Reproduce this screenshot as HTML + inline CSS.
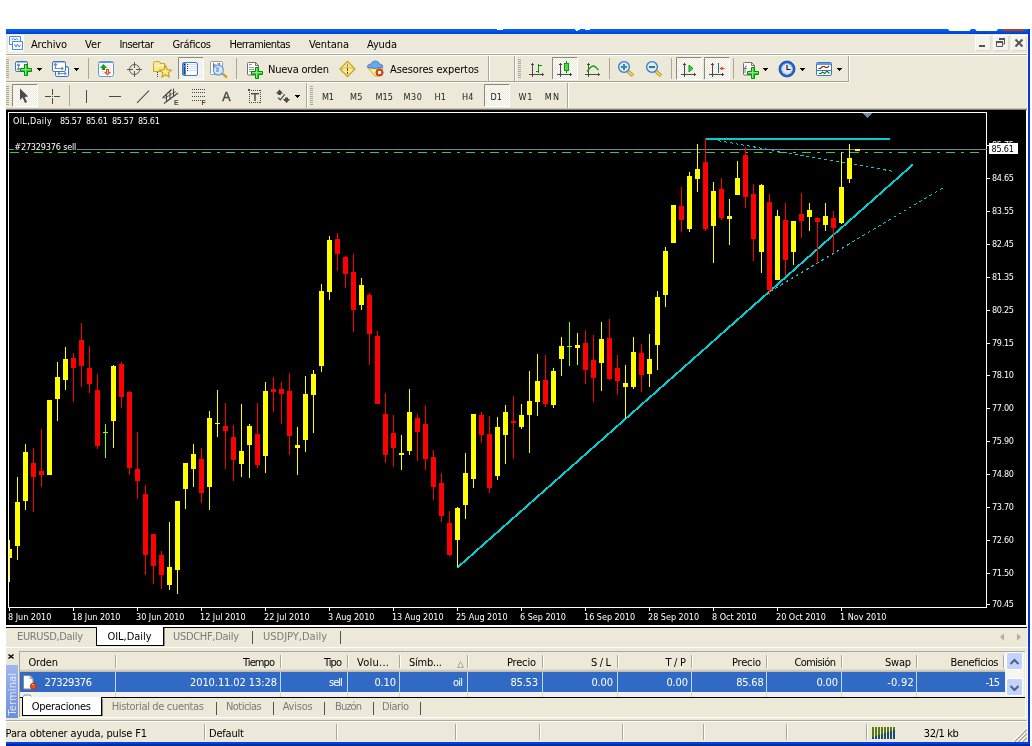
<!DOCTYPE html><html><head><meta charset="utf-8"><title>OIL,Daily</title><style>html,body{margin:0;padding:0;background:#fff}body{width:1032px;height:746px;overflow:hidden}svg{display:block;font-family:"DejaVu Sans Condensed","Liberation Sans",sans-serif;font-size:11px;will-change:transform;-webkit-font-smoothing:antialiased}text{white-space:pre}</style></head><body><svg width="1032" height="746" viewBox="0 0 1032 746">
<rect x="6" y="29" width="1024" height="717" fill="#ECE9D8"/>
<defs><linearGradient id="tb" x1="0" y1="0" x2="0" y2="1"><stop offset="0" stop-color="#0b62ee"/><stop offset=".5" stop-color="#0054e3"/><stop offset="1" stop-color="#0040c8"/></linearGradient><pattern id="chk" width="2" height="2" patternUnits="userSpaceOnUse"><rect width="2" height="2" fill="#fff"/><rect width="1" height="1" fill="#ECE9D8"/><rect x="1" y="1" width="1" height="1" fill="#ECE9D8"/></pattern></defs>
<rect x="6" y="29" width="1024" height="5" fill="url(#tb)"/>
<rect x="1027" y="34" width="1" height="708" fill="#fbf8ec"/>
<rect x="1028" y="29" width="2" height="717" fill="#0636df"/>
<rect x="6" y="53" width="1021" height="1" fill="#fff"/>
<rect x="6" y="54" width="1021" height="1" fill="#aca899"/>
<rect x="6" y="55" width="1021" height="1" fill="#fff"/>
<rect x="6" y="81" width="843" height="1" fill="#a8a48f"/>
<rect x="6" y="82" width="844" height="1" fill="#fff"/>
<rect x="6" y="108" width="1021" height="1" fill="#c9c6b4"/>
<rect x="6" y="109" width="1021" height="1" fill="#807d6c"/>
<rect x="6" y="110" width="1020" height="515" fill="#000"/>
<rect x="1026" y="110" width="1" height="515" fill="#fff"/>
<g shape-rendering="crispEdges">
<path d="M8.5 608 V112.5 H986.5 V608 M8 607.5 H987" fill="none" stroke="#fff" stroke-width="1"/>
<rect x="9" y="149" width="978" height="1" fill="#778899"/>
<path d="M10 152.5 H980" fill="none" stroke="#32cd32" stroke-width="1" stroke-dasharray="9 6 3 6"/>
<path d="M457.5 567.5 L913 164.5" fill="none" stroke="#00ced1" stroke-width="2"/>
<rect x="706" y="138" width="184" height="2" fill="#00ced1"/>
<path d="M706 138.5 L894 171.5" fill="none" stroke="#00ced1" stroke-width="1" stroke-dasharray="3 3"/>
<path d="M770 291.5 L945 186.5" fill="none" stroke="#00ced1" stroke-width="1" stroke-dasharray="3 3"/>
<rect x="9" y="540" width="1" height="42" fill="#ffff00"/>
<rect x="9" y="549" width="3" height="9" fill="#ffff00"/>
<rect x="17" y="477" width="1" height="83" fill="#ffff00"/>
<rect x="15" y="502" width="5" height="44" fill="#ffff00"/>
<rect x="25" y="444" width="1" height="66" fill="#ffff00"/>
<rect x="23" y="452" width="5" height="49" fill="#ffff00"/>
<rect x="33" y="448" width="1" height="64" fill="#ff0000"/>
<rect x="31" y="463" width="5" height="14" fill="#ff0000"/>
<rect x="41" y="429" width="1" height="58" fill="#ff0000"/>
<rect x="39" y="471" width="5" height="4" fill="#ff0000"/>
<rect x="49" y="400" width="1" height="75" fill="#ffff00"/>
<rect x="47" y="400" width="5" height="75" fill="#ffff00"/>
<rect x="57" y="362" width="1" height="59" fill="#ffff00"/>
<rect x="55" y="377" width="5" height="22" fill="#ffff00"/>
<rect x="65" y="347" width="1" height="43" fill="#ffff00"/>
<rect x="63" y="359" width="5" height="21" fill="#ffff00"/>
<rect x="73" y="353" width="1" height="49" fill="#ff0000"/>
<rect x="71" y="358" width="5" height="10" fill="#ff0000"/>
<rect x="81" y="323" width="1" height="64" fill="#ff0000"/>
<rect x="79" y="340" width="5" height="26" fill="#ff0000"/>
<rect x="89" y="346" width="1" height="47" fill="#ff0000"/>
<rect x="87" y="368" width="5" height="16" fill="#ff0000"/>
<rect x="97" y="374" width="1" height="75" fill="#ff0000"/>
<rect x="95" y="390" width="5" height="56" fill="#ff0000"/>
<rect x="105" y="424" width="1" height="34" fill="#7fff00"/>
<rect x="103" y="432" width="5" height="1" fill="#7fff00"/>
<rect x="113" y="365" width="1" height="83" fill="#ffff00"/>
<rect x="111" y="366" width="5" height="55" fill="#ffff00"/>
<rect x="121" y="362" width="1" height="46" fill="#ff0000"/>
<rect x="119" y="364" width="5" height="33" fill="#ff0000"/>
<rect x="129" y="391" width="1" height="84" fill="#ff0000"/>
<rect x="127" y="392" width="5" height="76" fill="#ff0000"/>
<rect x="137" y="432" width="1" height="67" fill="#ff0000"/>
<rect x="135" y="469" width="5" height="12" fill="#ff0000"/>
<rect x="145" y="485" width="1" height="90" fill="#ff0000"/>
<rect x="143" y="494" width="5" height="61" fill="#ff0000"/>
<rect x="153" y="534" width="1" height="50" fill="#ff0000"/>
<rect x="151" y="534" width="5" height="32" fill="#ff0000"/>
<rect x="161" y="551" width="1" height="38" fill="#ff0000"/>
<rect x="159" y="555" width="5" height="20" fill="#ff0000"/>
<rect x="169" y="522" width="1" height="68" fill="#ffff00"/>
<rect x="167" y="567" width="5" height="18" fill="#ffff00"/>
<rect x="177" y="501" width="1" height="93" fill="#ffff00"/>
<rect x="175" y="501" width="5" height="69" fill="#ffff00"/>
<rect x="185" y="463" width="1" height="46" fill="#ffff00"/>
<rect x="183" y="463" width="5" height="26" fill="#ffff00"/>
<rect x="193" y="444" width="1" height="43" fill="#ffff00"/>
<rect x="191" y="454" width="5" height="15" fill="#ffff00"/>
<rect x="201" y="448" width="1" height="55" fill="#ff0000"/>
<rect x="199" y="459" width="5" height="34" fill="#ff0000"/>
<rect x="209" y="411" width="1" height="99" fill="#ffff00"/>
<rect x="207" y="418" width="5" height="69" fill="#ffff00"/>
<rect x="217" y="390" width="1" height="47" fill="#ffff00"/>
<rect x="215" y="423" width="5" height="1" fill="#ffff00"/>
<rect x="225" y="403" width="1" height="66" fill="#ff0000"/>
<rect x="223" y="426" width="5" height="5" fill="#ff0000"/>
<rect x="233" y="425" width="1" height="56" fill="#ff0000"/>
<rect x="231" y="437" width="5" height="23" fill="#ff0000"/>
<rect x="241" y="404" width="1" height="73" fill="#ffff00"/>
<rect x="239" y="451" width="5" height="13" fill="#ffff00"/>
<rect x="249" y="424" width="1" height="54" fill="#ffff00"/>
<rect x="247" y="426" width="5" height="19" fill="#ffff00"/>
<rect x="257" y="403" width="1" height="65" fill="#ff0000"/>
<rect x="255" y="434" width="5" height="31" fill="#ff0000"/>
<rect x="265" y="382" width="1" height="91" fill="#ffff00"/>
<rect x="263" y="391" width="5" height="65" fill="#ffff00"/>
<rect x="273" y="377" width="1" height="35" fill="#ff0000"/>
<rect x="271" y="389" width="5" height="3" fill="#ff0000"/>
<rect x="281" y="382" width="1" height="42" fill="#ff0000"/>
<rect x="279" y="389" width="5" height="5" fill="#ff0000"/>
<rect x="289" y="373" width="1" height="82" fill="#ff0000"/>
<rect x="287" y="391" width="5" height="45" fill="#ff0000"/>
<rect x="297" y="427" width="1" height="48" fill="#ffff00"/>
<rect x="295" y="445" width="5" height="3" fill="#ffff00"/>
<rect x="305" y="376" width="1" height="76" fill="#ffff00"/>
<rect x="303" y="394" width="5" height="46" fill="#ffff00"/>
<rect x="313" y="370" width="1" height="63" fill="#ffff00"/>
<rect x="311" y="374" width="5" height="21" fill="#ffff00"/>
<rect x="321" y="284" width="1" height="88" fill="#ffff00"/>
<rect x="319" y="291" width="5" height="75" fill="#ffff00"/>
<rect x="329" y="236" width="1" height="64" fill="#ffff00"/>
<rect x="327" y="240" width="5" height="52" fill="#ffff00"/>
<rect x="337" y="233" width="1" height="38" fill="#ff0000"/>
<rect x="335" y="239" width="5" height="15" fill="#ff0000"/>
<rect x="345" y="256" width="1" height="32" fill="#ff0000"/>
<rect x="343" y="257" width="5" height="17" fill="#ff0000"/>
<rect x="353" y="254" width="1" height="78" fill="#ff0000"/>
<rect x="351" y="272" width="5" height="38" fill="#ff0000"/>
<rect x="361" y="278" width="1" height="32" fill="#ffff00"/>
<rect x="359" y="285" width="5" height="20" fill="#ffff00"/>
<rect x="369" y="293" width="1" height="72" fill="#ff0000"/>
<rect x="367" y="295" width="5" height="39" fill="#ff0000"/>
<rect x="377" y="331" width="1" height="73" fill="#ff0000"/>
<rect x="375" y="336" width="5" height="68" fill="#ff0000"/>
<rect x="385" y="393" width="1" height="70" fill="#ff0000"/>
<rect x="383" y="414" width="5" height="41" fill="#ff0000"/>
<rect x="393" y="415" width="1" height="52" fill="#ff0000"/>
<rect x="391" y="433" width="5" height="15" fill="#ff0000"/>
<rect x="401" y="435" width="1" height="35" fill="#ffff00"/>
<rect x="399" y="453" width="5" height="2" fill="#ffff00"/>
<rect x="409" y="389" width="1" height="66" fill="#ffff00"/>
<rect x="407" y="412" width="5" height="39" fill="#ffff00"/>
<rect x="417" y="414" width="1" height="47" fill="#ff0000"/>
<rect x="415" y="418" width="5" height="14" fill="#ff0000"/>
<rect x="425" y="405" width="1" height="65" fill="#ff0000"/>
<rect x="423" y="424" width="5" height="35" fill="#ff0000"/>
<rect x="433" y="450" width="1" height="50" fill="#ff0000"/>
<rect x="431" y="457" width="5" height="30" fill="#ff0000"/>
<rect x="441" y="473" width="1" height="49" fill="#ff0000"/>
<rect x="439" y="483" width="5" height="33" fill="#ff0000"/>
<rect x="449" y="511" width="1" height="45" fill="#ff0000"/>
<rect x="447" y="523" width="5" height="32" fill="#ff0000"/>
<rect x="457" y="507" width="1" height="60" fill="#ffff00"/>
<rect x="455" y="508" width="5" height="32" fill="#ffff00"/>
<rect x="465" y="453" width="1" height="66" fill="#ffff00"/>
<rect x="463" y="473" width="5" height="32" fill="#ffff00"/>
<rect x="473" y="414" width="1" height="74" fill="#ffff00"/>
<rect x="471" y="414" width="5" height="65" fill="#ffff00"/>
<rect x="481" y="412" width="1" height="31" fill="#ff0000"/>
<rect x="479" y="415" width="5" height="20" fill="#ff0000"/>
<rect x="489" y="416" width="1" height="77" fill="#ff0000"/>
<rect x="487" y="434" width="5" height="54" fill="#ff0000"/>
<rect x="497" y="417" width="1" height="63" fill="#ffff00"/>
<rect x="495" y="427" width="5" height="49" fill="#ffff00"/>
<rect x="505" y="405" width="1" height="59" fill="#ffff00"/>
<rect x="503" y="412" width="5" height="23" fill="#ffff00"/>
<rect x="513" y="396" width="1" height="63" fill="#ff0000"/>
<rect x="511" y="421" width="5" height="2" fill="#ff0000"/>
<rect x="521" y="404" width="1" height="25" fill="#ffff00"/>
<rect x="519" y="415" width="5" height="12" fill="#ffff00"/>
<rect x="529" y="371" width="1" height="82" fill="#ffff00"/>
<rect x="527" y="401" width="5" height="14" fill="#ffff00"/>
<rect x="537" y="354" width="1" height="62" fill="#ffff00"/>
<rect x="535" y="381" width="5" height="21" fill="#ffff00"/>
<rect x="545" y="355" width="1" height="52" fill="#ff0000"/>
<rect x="543" y="380" width="5" height="24" fill="#ff0000"/>
<rect x="553" y="368" width="1" height="40" fill="#ffff00"/>
<rect x="551" y="371" width="5" height="34" fill="#ffff00"/>
<rect x="561" y="337" width="1" height="39" fill="#ffff00"/>
<rect x="559" y="346" width="5" height="13" fill="#ffff00"/>
<rect x="569" y="322" width="1" height="44" fill="#7fff00"/>
<rect x="567" y="346" width="5" height="1" fill="#7fff00"/>
<rect x="577" y="333" width="1" height="32" fill="#ffff00"/>
<rect x="575" y="345" width="5" height="3" fill="#ffff00"/>
<rect x="585" y="330" width="1" height="54" fill="#ff0000"/>
<rect x="583" y="343" width="5" height="27" fill="#ff0000"/>
<rect x="593" y="335" width="1" height="67" fill="#ff0000"/>
<rect x="591" y="360" width="5" height="18" fill="#ff0000"/>
<rect x="601" y="322" width="1" height="69" fill="#ffff00"/>
<rect x="599" y="339" width="5" height="24" fill="#ffff00"/>
<rect x="609" y="319" width="1" height="61" fill="#ff0000"/>
<rect x="607" y="338" width="5" height="41" fill="#ff0000"/>
<rect x="617" y="355" width="1" height="40" fill="#ff0000"/>
<rect x="615" y="368" width="5" height="13" fill="#ff0000"/>
<rect x="625" y="365" width="1" height="53" fill="#ffff00"/>
<rect x="623" y="383" width="5" height="4" fill="#ffff00"/>
<rect x="633" y="337" width="1" height="52" fill="#ffff00"/>
<rect x="631" y="352" width="5" height="35" fill="#ffff00"/>
<rect x="641" y="344" width="1" height="48" fill="#ff0000"/>
<rect x="639" y="353" width="5" height="22" fill="#ff0000"/>
<rect x="649" y="334" width="1" height="53" fill="#ffff00"/>
<rect x="647" y="359" width="5" height="15" fill="#ffff00"/>
<rect x="657" y="291" width="1" height="79" fill="#ffff00"/>
<rect x="655" y="297" width="5" height="48" fill="#ffff00"/>
<rect x="665" y="247" width="1" height="60" fill="#ffff00"/>
<rect x="663" y="251" width="5" height="44" fill="#ffff00"/>
<rect x="673" y="205" width="1" height="38" fill="#ffff00"/>
<rect x="671" y="205" width="5" height="38" fill="#ffff00"/>
<rect x="681" y="187" width="1" height="45" fill="#ff0000"/>
<rect x="679" y="206" width="5" height="14" fill="#ff0000"/>
<rect x="689" y="172" width="1" height="60" fill="#ffff00"/>
<rect x="687" y="176" width="5" height="53" fill="#ffff00"/>
<rect x="697" y="144" width="1" height="48" fill="#ffff00"/>
<rect x="695" y="169" width="5" height="10" fill="#ffff00"/>
<rect x="705" y="138" width="1" height="93" fill="#ff0000"/>
<rect x="703" y="162" width="5" height="67" fill="#ff0000"/>
<rect x="713" y="182" width="1" height="81" fill="#ffff00"/>
<rect x="711" y="191" width="5" height="35" fill="#ffff00"/>
<rect x="721" y="178" width="1" height="42" fill="#ff0000"/>
<rect x="719" y="189" width="5" height="29" fill="#ff0000"/>
<rect x="729" y="199" width="1" height="46" fill="#ffff00"/>
<rect x="727" y="216" width="5" height="3" fill="#ffff00"/>
<rect x="737" y="161" width="1" height="34" fill="#ffff00"/>
<rect x="735" y="178" width="5" height="17" fill="#ffff00"/>
<rect x="745" y="147" width="1" height="61" fill="#ff0000"/>
<rect x="743" y="155" width="5" height="42" fill="#ff0000"/>
<rect x="753" y="184" width="1" height="77" fill="#ff0000"/>
<rect x="751" y="194" width="5" height="45" fill="#ff0000"/>
<rect x="761" y="184" width="1" height="89" fill="#ffff00"/>
<rect x="759" y="185" width="5" height="67" fill="#ffff00"/>
<rect x="769" y="194" width="1" height="101" fill="#ff0000"/>
<rect x="767" y="202" width="5" height="88" fill="#ff0000"/>
<rect x="777" y="210" width="1" height="70" fill="#ffff00"/>
<rect x="775" y="216" width="5" height="64" fill="#ffff00"/>
<rect x="785" y="203" width="1" height="73" fill="#ff0000"/>
<rect x="783" y="220" width="5" height="40" fill="#ff0000"/>
<rect x="793" y="221" width="1" height="44" fill="#ffff00"/>
<rect x="791" y="221" width="5" height="31" fill="#ffff00"/>
<rect x="801" y="193" width="1" height="45" fill="#ff0000"/>
<rect x="799" y="214" width="5" height="7" fill="#ff0000"/>
<rect x="809" y="203" width="1" height="28" fill="#ffff00"/>
<rect x="807" y="210" width="5" height="7" fill="#ffff00"/>
<rect x="817" y="217" width="1" height="47" fill="#ff0000"/>
<rect x="815" y="218" width="5" height="4" fill="#ff0000"/>
<rect x="825" y="203" width="1" height="28" fill="#ffff00"/>
<rect x="823" y="216" width="5" height="9" fill="#ffff00"/>
<rect x="833" y="211" width="1" height="42" fill="#ff0000"/>
<rect x="831" y="218" width="5" height="10" fill="#ff0000"/>
<rect x="841" y="152" width="1" height="72" fill="#ffff00"/>
<rect x="839" y="187" width="5" height="36" fill="#ffff00"/>
<rect x="849" y="144" width="1" height="39" fill="#ffff00"/>
<rect x="847" y="158" width="5" height="21" fill="#ffff00"/>
<rect x="855" y="149" width="5" height="2" fill="#ffff00"/>
<rect x="863" y="113" width="9" height="1" fill="#778899"/>
<rect x="864" y="114" width="7" height="1" fill="#778899"/>
<rect x="865" y="115" width="5" height="1" fill="#778899"/>
<rect x="866" y="116" width="3" height="1" fill="#778899"/>
<rect x="867" y="117" width="1" height="1" fill="#778899"/>
</g>
<g font-size="9" fill="#fff">
<rect x="987" y="145" width="3" height="1" fill="#fff" shape-rendering="crispEdges"/>
<text x="992" y="148" font-size="9" fill="#fff" textLength="22">85.75</text>
<rect x="987" y="178" width="3" height="1" fill="#fff" shape-rendering="crispEdges"/>
<text x="992" y="181" font-size="9" fill="#fff" textLength="22">84.65</text>
<rect x="987" y="211" width="3" height="1" fill="#fff" shape-rendering="crispEdges"/>
<text x="992" y="214" font-size="9" fill="#fff" textLength="22">83.55</text>
<rect x="987" y="244" width="3" height="1" fill="#fff" shape-rendering="crispEdges"/>
<text x="992" y="247" font-size="9" fill="#fff" textLength="22">82.45</text>
<rect x="987" y="277" width="3" height="1" fill="#fff" shape-rendering="crispEdges"/>
<text x="992" y="280" font-size="9" fill="#fff" textLength="22">81.35</text>
<rect x="987" y="310" width="3" height="1" fill="#fff" shape-rendering="crispEdges"/>
<text x="992" y="313" font-size="9" fill="#fff" textLength="22">80.25</text>
<rect x="987" y="343" width="3" height="1" fill="#fff" shape-rendering="crispEdges"/>
<text x="992" y="346" font-size="9" fill="#fff" textLength="22">79.15</text>
<rect x="987" y="375" width="3" height="1" fill="#fff" shape-rendering="crispEdges"/>
<text x="992" y="378" font-size="9" fill="#fff" textLength="22">78.10</text>
<rect x="987" y="408" width="3" height="1" fill="#fff" shape-rendering="crispEdges"/>
<text x="992" y="411" font-size="9" fill="#fff" textLength="22">77.00</text>
<rect x="987" y="441" width="3" height="1" fill="#fff" shape-rendering="crispEdges"/>
<text x="992" y="444" font-size="9" fill="#fff" textLength="22">75.90</text>
<rect x="987" y="474" width="3" height="1" fill="#fff" shape-rendering="crispEdges"/>
<text x="992" y="477" font-size="9" fill="#fff" textLength="22">74.80</text>
<rect x="987" y="507" width="3" height="1" fill="#fff" shape-rendering="crispEdges"/>
<text x="992" y="510" font-size="9" fill="#fff" textLength="22">73.70</text>
<rect x="987" y="540" width="3" height="1" fill="#fff" shape-rendering="crispEdges"/>
<text x="992" y="543" font-size="9" fill="#fff" textLength="22">72.60</text>
<rect x="987" y="573" width="3" height="1" fill="#fff" shape-rendering="crispEdges"/>
<text x="992" y="576" font-size="9" fill="#fff" textLength="22">71.50</text>
<rect x="987" y="604" width="3" height="1" fill="#fff" shape-rendering="crispEdges"/>
<text x="992" y="607" font-size="9" fill="#fff" textLength="22">70.45</text>
<rect x="989" y="143" width="29" height="11" fill="#fff"/>
<text x="991.5" y="152" font-size="9" textLength="22.5" fill="#000">85.61</text>
<rect x="9" y="608" width="1" height="3" fill="#fff" shape-rendering="crispEdges"/>
<text x="8" y="620" font-size="9" fill="#fff" textLength="43.4">8 Jun 2010</text>
<rect x="73" y="608" width="1" height="3" fill="#fff" shape-rendering="crispEdges"/>
<text x="72" y="620" font-size="9" fill="#fff" textLength="48.5">18 Jun 2010</text>
<rect x="137" y="608" width="1" height="3" fill="#fff" shape-rendering="crispEdges"/>
<text x="136" y="620" font-size="9" fill="#fff" textLength="48.5">30 Jun 2010</text>
<rect x="201" y="608" width="1" height="3" fill="#fff" shape-rendering="crispEdges"/>
<text x="200" y="620" font-size="9" fill="#fff" textLength="45.6">12 Jul 2010</text>
<rect x="265" y="608" width="1" height="3" fill="#fff" shape-rendering="crispEdges"/>
<text x="264" y="620" font-size="9" fill="#fff" textLength="45.6">22 Jul 2010</text>
<rect x="329" y="608" width="1" height="3" fill="#fff" shape-rendering="crispEdges"/>
<text x="328" y="620" font-size="9" fill="#fff" textLength="46.5">3 Aug 2010</text>
<rect x="393" y="608" width="1" height="3" fill="#fff" shape-rendering="crispEdges"/>
<text x="392" y="620" font-size="9" fill="#fff" textLength="51.6">13 Aug 2010</text>
<rect x="457" y="608" width="1" height="3" fill="#fff" shape-rendering="crispEdges"/>
<text x="456" y="620" font-size="9" fill="#fff" textLength="51.6">25 Aug 2010</text>
<rect x="521" y="608" width="1" height="3" fill="#fff" shape-rendering="crispEdges"/>
<text x="520" y="620" font-size="9" fill="#fff" textLength="46.0">6 Sep 2010</text>
<rect x="585" y="608" width="1" height="3" fill="#fff" shape-rendering="crispEdges"/>
<text x="584" y="620" font-size="9" fill="#fff" textLength="51.1">16 Sep 2010</text>
<rect x="649" y="608" width="1" height="3" fill="#fff" shape-rendering="crispEdges"/>
<text x="648" y="620" font-size="9" fill="#fff" textLength="51.1">28 Sep 2010</text>
<rect x="713" y="608" width="1" height="3" fill="#fff" shape-rendering="crispEdges"/>
<text x="712" y="620" font-size="9" fill="#fff" textLength="44.7">8 Oct 2010</text>
<rect x="777" y="608" width="1" height="3" fill="#fff" shape-rendering="crispEdges"/>
<text x="776" y="620" font-size="9" fill="#fff" textLength="49.8">20 Oct 2010</text>
<rect x="841" y="608" width="1" height="3" fill="#fff" shape-rendering="crispEdges"/>
<text x="840" y="620" font-size="9" fill="#fff" textLength="46.5">1 Nov 2010</text>
<text x="13" y="124" font-size="9" fill="#fff" textLength="38.7">OIL,Daily</text>
<text x="60" y="124" font-size="9" fill="#fff" textLength="21.8">85.57</text>
<text x="86" y="124" font-size="9" fill="#fff" textLength="21.8">85.61</text>
<text x="112" y="124" font-size="9" fill="#fff" textLength="21.8">85.57</text>
<text x="138" y="124" font-size="9" fill="#fff" textLength="21.8">85.61</text>
<rect x="14" y="141" width="63" height="9" fill="#000"/>
<text x="14.3" y="150" font-size="9" fill="#fff" textLength="62">#27329376 sell</text>
</g>
<rect x="8" y="35" width="16" height="17" fill="#fdfdfb"/>
<path d="M9.5 36.5 h11 v8 h-11 z" fill="#f4f8ff" stroke="#4a86f0" stroke-width="1"/>
<path d="M12.5 41.5 h10 v8 h-10 z" fill="#fff" stroke="#4a86f0" stroke-width="1"/>
<path d="M11.5 40 l2 -1.5 M13.5 38.5 l1.5 1.5 l1.5 -1.5 l1.5 1.5" fill="none" stroke="#4a86f0" stroke-width="1"/>
<path d="M14.5 44 l1.5 3 l1.5 -3 l1.5 3 l1.5 -2" fill="none" stroke="#4a86f0" stroke-width="1"/>
<text x="31" y="48" textLength="36">Archivo</text>
<text x="85" y="48" textLength="16">Ver</text>
<text x="119.5" y="48" textLength="34.5">Insertar</text>
<text x="172.5" y="48" textLength="38.5">Gráficos</text>
<text x="229.5" y="48" textLength="61">Herramientas</text>
<text x="309" y="48" textLength="40">Ventana</text>
<text x="367" y="48" textLength="30">Ayuda</text>
<rect x="975" y="35" width="16" height="16" fill="#f4f3ec"/>
<path d="M975.5 50.5 V35.5 H990.5" fill="none" stroke="#fff" stroke-width="1"/>
<path d="M990.5 36 V50.5 H976" fill="none" stroke="#dedbcc" stroke-width="1"/>
<rect x="993" y="35" width="16" height="16" fill="#f4f3ec"/>
<path d="M993.5 50.5 V35.5 H1008.5" fill="none" stroke="#fff" stroke-width="1"/>
<path d="M1008.5 36 V50.5 H994" fill="none" stroke="#dedbcc" stroke-width="1"/>
<rect x="1011" y="35" width="16" height="16" fill="#f4f3ec"/>
<path d="M1011.5 50.5 V35.5 H1026.5" fill="none" stroke="#fff" stroke-width="1"/>
<path d="M1026.5 36 V50.5 H1012" fill="none" stroke="#dedbcc" stroke-width="1"/>
<rect x="979" y="45" width="6" height="2" fill="#555"/>
<path d="M999 38.5 h6 M999.5 38 v2 M1004.5 38 v6 h-2" fill="none" stroke="#555" stroke-width="1"/>
<rect x="999" y="38" width="6" height="2" fill="#555"/>
<path d="M996.5 41.5 h6 v5 h-6 z" fill="none" stroke="#555" stroke-width="1"/>
<rect x="996" y="41" width="7" height="2" fill="#555"/>
<path d="M1015.5 39.5 l7 7 M1022.5 39.5 l-7 7" fill="none" stroke="#555" stroke-width="2"/>
<rect x="497" y="29" width="6" height="1" fill="#fff"/>
<rect x="575" y="29" width="5" height="1" fill="#fff"/>
<rect x="576" y="30" width="2" height="1" fill="#fff"/>
<rect x="585" y="29" width="5" height="1" fill="#fff"/>
<path d="M948 29 h23 l-1.5 2 h-20 z" fill="#fff"/>
<path d="M975 29 h23 l-1.5 2 h-20 z" fill="#fff"/>
<path d="M1002 29 h23 l-1.5 2 h-20 z" fill="#c03c10"/>
<rect x="6" y="59" width="3" height="1" fill="#a9a695"/>
<rect x="6" y="61" width="3" height="1" fill="#a9a695"/>
<rect x="6" y="63" width="3" height="1" fill="#a9a695"/>
<rect x="6" y="65" width="3" height="1" fill="#a9a695"/>
<rect x="6" y="67" width="3" height="1" fill="#a9a695"/>
<rect x="6" y="69" width="3" height="1" fill="#a9a695"/>
<rect x="6" y="71" width="3" height="1" fill="#a9a695"/>
<rect x="6" y="73" width="3" height="1" fill="#a9a695"/>
<rect x="6" y="75" width="3" height="1" fill="#a9a695"/>
<rect x="6" y="77" width="3" height="1" fill="#a9a695"/>
<rect x="6" y="86" width="3" height="1" fill="#a9a695"/>
<rect x="6" y="88" width="3" height="1" fill="#a9a695"/>
<rect x="6" y="90" width="3" height="1" fill="#a9a695"/>
<rect x="6" y="92" width="3" height="1" fill="#a9a695"/>
<rect x="6" y="94" width="3" height="1" fill="#a9a695"/>
<rect x="6" y="96" width="3" height="1" fill="#a9a695"/>
<rect x="6" y="98" width="3" height="1" fill="#a9a695"/>
<rect x="6" y="100" width="3" height="1" fill="#a9a695"/>
<rect x="6" y="102" width="3" height="1" fill="#a9a695"/>
<rect x="6" y="104" width="3" height="1" fill="#a9a695"/>
<rect x="310" y="86" width="3" height="1" fill="#a9a695"/>
<rect x="310" y="88" width="3" height="1" fill="#a9a695"/>
<rect x="310" y="90" width="3" height="1" fill="#a9a695"/>
<rect x="310" y="92" width="3" height="1" fill="#a9a695"/>
<rect x="310" y="94" width="3" height="1" fill="#a9a695"/>
<rect x="310" y="96" width="3" height="1" fill="#a9a695"/>
<rect x="310" y="98" width="3" height="1" fill="#a9a695"/>
<rect x="310" y="100" width="3" height="1" fill="#a9a695"/>
<rect x="310" y="102" width="3" height="1" fill="#a9a695"/>
<rect x="310" y="104" width="3" height="1" fill="#a9a695"/>
<rect x="518" y="59" width="3" height="1" fill="#a9a695"/>
<rect x="518" y="61" width="3" height="1" fill="#a9a695"/>
<rect x="518" y="63" width="3" height="1" fill="#a9a695"/>
<rect x="518" y="65" width="3" height="1" fill="#a9a695"/>
<rect x="518" y="67" width="3" height="1" fill="#a9a695"/>
<rect x="518" y="69" width="3" height="1" fill="#a9a695"/>
<rect x="518" y="71" width="3" height="1" fill="#a9a695"/>
<rect x="518" y="73" width="3" height="1" fill="#a9a695"/>
<rect x="518" y="75" width="3" height="1" fill="#a9a695"/>
<rect x="518" y="77" width="3" height="1" fill="#a9a695"/>
<rect x="88" y="58" width="1" height="21" fill="#aca899"/>
<rect x="236" y="58" width="1" height="21" fill="#aca899"/>
<rect x="609" y="58" width="1" height="21" fill="#aca899"/>
<rect x="671" y="58" width="1" height="21" fill="#aca899"/>
<rect x="733" y="58" width="1" height="21" fill="#aca899"/>
<rect x="69" y="85" width="1" height="21" fill="#aca899"/>
<rect x="488" y="56" width="1" height="25" fill="#aca899"/>
<rect x="489" y="56" width="1" height="25" fill="#fff"/>
<rect x="514" y="56" width="1" height="25" fill="#aca899"/>
<rect x="515" y="56" width="1" height="25" fill="#fff"/>
<rect x="848" y="56" width="1" height="25" fill="#aca899"/>
<rect x="849" y="56" width="1" height="25" fill="#fff"/>
<rect x="306" y="83" width="1" height="25" fill="#aca899"/>
<rect x="307" y="83" width="1" height="25" fill="#fff"/>
<rect x="567" y="83" width="1" height="25" fill="#aca899"/>
<rect x="568" y="83" width="1" height="25" fill="#fff"/>
<rect x="178" y="57" width="26" height="23" fill="url(#chk)"/>
<path d="M178.5 79.5 V57.5 H203.5" fill="none" stroke="#8d8a78" stroke-width="1"/>
<path d="M203.5 57.5 V79.5 H178.5" fill="none" stroke="#fff" stroke-width="1"/>
<rect x="552" y="57" width="26" height="23" fill="url(#chk)"/>
<path d="M552.5 79.5 V57.5 H577.5" fill="none" stroke="#8d8a78" stroke-width="1"/>
<path d="M577.5 57.5 V79.5 H552.5" fill="none" stroke="#fff" stroke-width="1"/>
<rect x="676" y="57" width="26" height="23" fill="url(#chk)"/>
<path d="M676.5 79.5 V57.5 H701.5" fill="none" stroke="#8d8a78" stroke-width="1"/>
<path d="M701.5 57.5 V79.5 H676.5" fill="none" stroke="#fff" stroke-width="1"/>
<rect x="704" y="57" width="26" height="23" fill="url(#chk)"/>
<path d="M704.5 79.5 V57.5 H729.5" fill="none" stroke="#8d8a78" stroke-width="1"/>
<path d="M729.5 57.5 V79.5 H704.5" fill="none" stroke="#fff" stroke-width="1"/>
<rect x="12" y="84" width="26" height="23" fill="url(#chk)"/>
<path d="M12.5 106.5 V84.5 H37.5" fill="none" stroke="#8d8a78" stroke-width="1"/>
<path d="M37.5 84.5 V106.5 H12.5" fill="none" stroke="#fff" stroke-width="1"/>
<rect x="484" y="84" width="26" height="23" fill="url(#chk)"/>
<path d="M484.5 106.5 V84.5 H509.5" fill="none" stroke="#8d8a78" stroke-width="1"/>
<path d="M509.5 84.5 V106.5 H484.5" fill="none" stroke="#fff" stroke-width="1"/>
<rect x="37" y="68" width="5" height="1" fill="#000"/>
<rect x="38" y="69" width="3" height="1" fill="#000"/>
<rect x="39" y="70" width="1" height="1" fill="#000"/>
<rect x="74" y="68" width="5" height="1" fill="#000"/>
<rect x="75" y="69" width="3" height="1" fill="#000"/>
<rect x="76" y="70" width="1" height="1" fill="#000"/>
<rect x="763" y="68" width="5" height="1" fill="#000"/>
<rect x="764" y="69" width="3" height="1" fill="#000"/>
<rect x="765" y="70" width="1" height="1" fill="#000"/>
<rect x="800" y="68" width="5" height="1" fill="#000"/>
<rect x="801" y="69" width="3" height="1" fill="#000"/>
<rect x="802" y="70" width="1" height="1" fill="#000"/>
<rect x="837" y="68" width="5" height="1" fill="#000"/>
<rect x="838" y="69" width="3" height="1" fill="#000"/>
<rect x="839" y="70" width="1" height="1" fill="#000"/>
<rect x="295" y="95" width="5" height="1" fill="#000"/>
<rect x="296" y="96" width="3" height="1" fill="#000"/>
<rect x="297" y="97" width="1" height="1" fill="#000"/>
<rect x="15.5" y="61.5" width="12" height="10" rx="1.5" fill="#fff" stroke="#3a78c8"/>
<rect x="16" y="62" width="11" height="1" fill="#9cc0f0"/>
<path d="M18.5 64 v6 M17 65.5 l1.5 -1.5 l1.5 1.5 M17 68.5 l1.5 1.5 l1.5 -1.5" fill="none" stroke="#7090b8" stroke-width="1.2"/>
<path d="M24.5 64.5 h3 v4 h4 v3 h-4 v4 h-3 v-4 h-4 v-3 h4 z" fill="#2fd02f" stroke="#0a8a0a" stroke-width="1"/>
<rect x="25" y="65" width="1" height="10" fill="#7df07d"/>
<rect x="21" y="69" width="10" height="1" fill="#7df07d"/>
<rect x="55.5" y="66.5" width="13" height="10" rx="1.5" fill="#fff" stroke="#3a78c8"/>
<rect x="56" y="67" width="12" height="1" fill="#9cc0f0"/>
<path d="M58 73.5 h8 M59.5 72 l-1.5 1.5 l1.5 1.5 M64.5 72 l1.5 1.5 l-1.5 1.5" fill="none" stroke="#7090b8" stroke-width="1.2"/>
<rect x="52.5" y="61.5" width="13" height="10" rx="1.5" fill="#fff" stroke="#3a78c8"/>
<rect x="53" y="62" width="12" height="1" fill="#9cc0f0"/>
<path d="M55.5 63.5 v5 M54 65 l1.5 -1.5 l1.5 1.5 M54.5 68.5 h8.5 M61.5 67 l1.5 1.5 l-1.5 1.5" fill="none" stroke="#7090b8" stroke-width="1.2"/>
<rect x="98.5" y="61.5" width="15" height="15" rx="2" fill="#fff" stroke="#5a9ae0"/>
<rect x="99" y="62" width="14" height="1" fill="#5a9ae0"/>
<rect x="101" y="65" width="10" height="1" fill="#e4e4e4"/>
<rect x="101" y="67" width="10" height="1" fill="#e4e4e4"/>
<rect x="101" y="69" width="10" height="1" fill="#e4e4e4"/>
<rect x="101" y="71" width="10" height="1" fill="#e4e4e4"/>
<rect x="101" y="73" width="10" height="1" fill="#e4e4e4"/>
<path d="M103.5 64 l3.5 4 h-2 v2 h-3 v-2 h-2 z" fill="#11a011"/>
<path d="M106 69 h3 v3 h2 l-3.5 3.5 l-3.5 -3.5 h2 z" fill="#e0501a"/>
<rect x="107" y="70" width="1" height="4" fill="#f0c0a0"/>
<circle cx="134.5" cy="69.5" r="5" fill="none" stroke="#5a5a5a" stroke-width="1"/>
<path d="M127 69.5 h6 M136 69.5 h6 M134.5 62 v6 M134.5 71 v6" fill="none" stroke="#5a5a5a" stroke-width="1"/>
<path d="M153.5 63.5 q0 -2 2 -2 h3 q2 0 2 2 h4 v8 h-11 z" fill="#f7e98c" stroke="#c9a227" stroke-width="1"/>
<rect x="154" y="65" width="10" height="1" fill="#fffbd6"/>
<rect x="157" y="72" width="1" height="1" fill="#333"/>
<rect x="157" y="74" width="1" height="1" fill="#333"/>
<rect x="157" y="76" width="1" height="1" fill="#333"/>
<path d="M165.6 65.8 l1.7 3.9 l4.1 .4 l-3.1 2.8 l.9 4.1 l-3.6 -2.2 l-3.6 2.2 l.9 -4.1 l-3.1 -2.8 l4.1 -.4 z" fill="#fbf08a" stroke="#c9a227" stroke-width="1.2"/>
<rect x="182.5" y="62.5" width="15" height="13" rx="1.5" fill="#fff" stroke="#3c7ccb"/>
<rect x="183" y="63" width="3" height="12" fill="#4d8edb"/>
<rect x="184" y="67" width="1" height="7" fill="#444"/>
<rect x="187" y="64" width="10" height="1" fill="#d0e0fa"/>
<rect x="187" y="66" width="10" height="1" fill="#d0e0fa"/>
<rect x="187" y="68" width="10" height="1" fill="#d0e0fa"/>
<rect x="187" y="70" width="10" height="1" fill="#d0e0fa"/>
<rect x="187" y="64" width="1" height="1" fill="#f00"/>
<rect x="187" y="70" width="1" height="1" fill="#f00"/>
<rect x="187" y="66" width="1" height="1" fill="#333"/>
<rect x="187" y="68" width="1" height="1" fill="#333"/>
<rect x="184" y="64" width="1" height="1" fill="#000"/>
<rect x="210.5" y="61.5" width="12" height="13" rx="1" fill="#fff" stroke="#9a9a9a"/>
<path d="M213.5 63 v8 M219.5 63 v4 M213.5 65.5 l2 -1 M219.5 64.5 l-2 -1" fill="none" stroke="#666" stroke-width="1"/>
<circle cx="218.3" cy="70" r="5" fill="#cfe3fb" fill-opacity=".85" stroke="#6aa0e8" stroke-width="1.3"/>
<rect x="216" y="67" width="3" height="5" fill="#8fb0e0"/>
<path d="M222.5 73.7 L227 77.5" fill="none" stroke="#c9a227" stroke-width="2.4"/>
<path d="M247.5 63.5 q0 -1 1 -1 h7 l3 3 v8.5 q0 1 -1 1 h-9 q-1 0 -1 -1 z" fill="#fff" stroke="#707070" stroke-width="1"/>
<path d="M255.5 62.5 v3 h3" fill="none" stroke="#707070" stroke-width="1"/>
<rect x="249" y="64" width="3" height="1" fill="#999"/>
<rect x="249" y="67" width="5" height="1" fill="#999"/>
<rect x="249" y="69" width="5" height="1" fill="#999"/>
<rect x="249" y="71" width="3" height="1" fill="#999"/>
<path d="M255.5 67.5 h3 v4 h4 v3 h-4 v4 h-3 v-4 h-4 v-3 h4 z" fill="#2fd02f" stroke="#0a8a0a" stroke-width="1"/>
<rect x="256" y="68" width="1" height="10" fill="#7df07d"/>
<rect x="252" y="72" width="10" height="1" fill="#7df07d"/>
<path d="M347.5 61.5 L355 69 L347.5 76.5 L340 69 Z" fill="#f9ee8a" stroke="#c9a227" stroke-width="1.3"/>
<path d="M341 69 l6.5 -2 l6.5 2" fill="none" stroke="#d8b840" stroke-width="1"/>
<rect x="347" y="64" width="1" height="3" fill="#888"/>
<rect x="347" y="68" width="1" height="3" fill="#a02010"/>
<rect x="347" y="72" width="1" height="2" fill="#a02010"/>
<path d="M368 68 h15 l-5 8 h-3 z" fill="#f9ee8a" stroke="#c9a227" stroke-width="1"/>
<path d="M367 67 q1 -3 4 -3 q1 -3 4.5 -3 q3 0 4 3 q3 0 3.5 3 q-8 3 -16 0 z" fill="#6aa6ea" stroke="#4a86d8" stroke-width="1"/>
<circle cx="379.5" cy="72.5" r="3.6" fill="#e84a1a" stroke="#b83008" stroke-width=".8"/>
<rect x="378" y="71" width="3" height="3" fill="#fff"/>
<rect x="532" y="63" width="1" height="14" fill="#4a4a4a"/>
<rect x="531" y="64" width="3" height="1" fill="#4a4a4a"/>
<rect x="529" y="74" width="15" height="1" fill="#4a4a4a"/>
<rect x="542" y="73" width="1" height="3" fill="#4a4a4a"/>
<rect x="538" y="64" width="1" height="9" fill="#0a8a0a"/>
<rect x="539" y="65" width="3" height="1" fill="#0a8a0a"/>
<rect x="536" y="71" width="2" height="1" fill="#0a8a0a"/>
<rect x="560" y="63" width="1" height="14" fill="#4a4a4a"/>
<rect x="559" y="64" width="3" height="1" fill="#4a4a4a"/>
<rect x="557" y="74" width="15" height="1" fill="#4a4a4a"/>
<rect x="570" y="73" width="1" height="3" fill="#4a4a4a"/>
<rect x="566" y="61" width="1" height="12" fill="#0a8a0a"/>
<rect x="564.5" y="63.5" width="4" height="7" fill="#4be04b" stroke="#0a9a0a"/>
<rect x="588" y="63" width="1" height="14" fill="#4a4a4a"/>
<rect x="587" y="64" width="3" height="1" fill="#4a4a4a"/>
<rect x="585" y="74" width="15" height="1" fill="#4a4a4a"/>
<rect x="598" y="73" width="1" height="3" fill="#4a4a4a"/>
<path d="M587 71.5 Q591 66 593.5 66 Q595 66 598.5 70" fill="none" stroke="#12a012" stroke-width="1.3"/>
<path d="M628 71.2 L633 75.8" fill="none" stroke="#b8901a" stroke-width="3.4"/>
<path d="M628.3 71.5 L632.7 75.5" fill="none" stroke="#f5e27a" stroke-width="1.6"/>
<circle cx="624" cy="67" r="5.4" fill="#d8ecfb" stroke="#3a78c8" stroke-width="1.3"/>
<rect x="621" y="66" width="6" height="2" fill="#3a8a9a"/>
<rect x="623" y="64" width="2" height="6" fill="#3a8a9a"/>
<path d="M656 71.2 L661 75.8" fill="none" stroke="#b8901a" stroke-width="3.4"/>
<path d="M656.3 71.5 L660.7 75.5" fill="none" stroke="#f5e27a" stroke-width="1.6"/>
<circle cx="652" cy="67" r="5.4" fill="#d8ecfb" stroke="#3a78c8" stroke-width="1.3"/>
<rect x="649" y="66" width="6" height="2" fill="#3a7a8a"/>
<rect x="684" y="63" width="1" height="14" fill="#4a4a4a"/>
<rect x="683" y="64" width="3" height="1" fill="#4a4a4a"/>
<rect x="681" y="74" width="15" height="1" fill="#4a4a4a"/>
<rect x="694" y="73" width="1" height="3" fill="#4a4a4a"/>
<path d="M689 65 l4 3.5 l-4 3.5 z" fill="#3fd03f" stroke="#0a9a0a" stroke-width="1"/>
<rect x="712" y="63" width="1" height="14" fill="#4a4a4a"/>
<rect x="711" y="64" width="3" height="1" fill="#4a4a4a"/>
<rect x="709" y="74" width="15" height="1" fill="#4a4a4a"/>
<rect x="722" y="73" width="1" height="3" fill="#4a4a4a"/>
<rect x="718" y="63" width="1" height="10" fill="#1a6a9a"/>
<path d="M719.5 68.5 l3 -2 v1.5 h2 v1 h-2 v1.5 z" fill="#d84010"/>
<path d="M743.5 63.5 q0 -1 1 -1 h7 l3 3 v8.5 q0 1 -1 1 h-9 q-1 0 -1 -1 z" fill="#fff" stroke="#707070" stroke-width="1"/>
<path d="M751.5 62.5 v3 h3" fill="none" stroke="#707070" stroke-width="1"/>
<path d="M747 66 q-2 0 -2 2 v5" fill="none" stroke="#777" stroke-width="1"/>
<rect x="744" y="68" width="3" height="1" fill="#777"/>
<path d="M751.5 67.5 h3 v4 h4 v3 h-4 v4 h-3 v-4 h-4 v-3 h4 z" fill="#2fd02f" stroke="#0a8a0a" stroke-width="1"/>
<rect x="752" y="68" width="1" height="10" fill="#7df07d"/>
<rect x="748" y="72" width="10" height="1" fill="#7df07d"/>
<circle cx="787" cy="69" r="6.9" fill="#e4e6f0" stroke="#1c62d8" stroke-width="2.4"/>
<circle cx="787" cy="69" r="8" fill="none" stroke="#17408f" stroke-width=".7"/>
<path d="M787 70 v-5 M786.5 69.5 h4" fill="none" stroke="#222" stroke-width="1.2"/>
<rect x="791.5" y="68.5" width="1" height="1" fill="#9aa0b8"/>
<rect x="790.8" y="71.0" width="1" height="1" fill="#9aa0b8"/>
<rect x="789.0" y="72.8" width="1" height="1" fill="#9aa0b8"/>
<rect x="786.5" y="73.5" width="1" height="1" fill="#9aa0b8"/>
<rect x="784.0" y="72.8" width="1" height="1" fill="#9aa0b8"/>
<rect x="782.2" y="71.0" width="1" height="1" fill="#9aa0b8"/>
<rect x="781.5" y="68.5" width="1" height="1" fill="#9aa0b8"/>
<rect x="782.2" y="66.0" width="1" height="1" fill="#9aa0b8"/>
<rect x="784.0" y="64.2" width="1" height="1" fill="#9aa0b8"/>
<rect x="786.5" y="63.5" width="1" height="1" fill="#9aa0b8"/>
<rect x="789.0" y="64.2" width="1" height="1" fill="#9aa0b8"/>
<rect x="790.8" y="66.0" width="1" height="1" fill="#9aa0b8"/>
<rect x="816.5" y="62.5" width="15" height="13" rx="1" fill="#fff" stroke="#3a78c8"/>
<rect x="817" y="63" width="14" height="2" fill="#5f9be6"/>
<rect x="817" y="70" width="14" height="1" fill="#3a78c8"/>
<path d="M818.5 68.5 h2 l2 -2 h2 l1 1 h2 l1.5 -1.5" fill="none" stroke="#a02010" stroke-width="1.2"/>
<path d="M819 73.5 h2 l1.5 -1.5 l2 1.5 l2.5 -2.5 l2.5 2.5" fill="none" stroke="#0a8a0a" stroke-width="1.2"/>
<path d="M20 88.5 V100 L22.6 97.6 L25 103 L27 102 L24.6 96.9 L28.2 96.6 Z" fill="#4a4a4a"/>
<rect x="45" y="96" width="6" height="1" fill="#4a4a4a"/>
<rect x="54" y="96" width="6" height="1" fill="#4a4a4a"/>
<rect x="52" y="89" width="1" height="6" fill="#4a4a4a"/>
<rect x="52" y="98" width="1" height="6" fill="#4a4a4a"/>
<rect x="52" y="96" width="1" height="1" fill="#4a4a4a"/>
<rect x="86" y="90" width="1" height="13" fill="#4a4a4a"/>
<rect x="109" y="96" width="12" height="1" fill="#4a4a4a"/>
<path d="M137 102.8 L149 90.7" fill="none" stroke="#4a4a4a" stroke-width="1.1"/>
<path d="M162.5 98 L171.5 89.5 M164 103.5 L178 93" fill="none" stroke="#4a4a4a" stroke-width="1.2"/>
<path d="M166.5 94 v8 M170 91.5 v8 M173.5 88.5 v8.5" fill="none" stroke="#4a4a4a" stroke-width="1.1"/>
<path d="M164 98.5 L176 91.5" fill="none" stroke="#4a4a4a" stroke-width="0.8"/>
<text x="174" y="105" font-size="7" fill="#4a4a4a" font-family='"Liberation Sans",sans-serif' font-weight="bold">E</text>
<rect x="192" y="89" width="1" height="1" fill="#4a4a4a"/>
<rect x="194" y="89" width="1" height="1" fill="#4a4a4a"/>
<rect x="196" y="89" width="1" height="1" fill="#4a4a4a"/>
<rect x="198" y="89" width="1" height="1" fill="#4a4a4a"/>
<rect x="200" y="89" width="1" height="1" fill="#4a4a4a"/>
<rect x="202" y="89" width="1" height="1" fill="#4a4a4a"/>
<rect x="204" y="89" width="1" height="1" fill="#4a4a4a"/>
<rect x="192" y="92" width="1" height="1" fill="#4a4a4a"/>
<rect x="194" y="92" width="1" height="1" fill="#4a4a4a"/>
<rect x="196" y="92" width="1" height="1" fill="#4a4a4a"/>
<rect x="198" y="92" width="1" height="1" fill="#4a4a4a"/>
<rect x="200" y="92" width="1" height="1" fill="#4a4a4a"/>
<rect x="202" y="92" width="1" height="1" fill="#4a4a4a"/>
<rect x="204" y="92" width="1" height="1" fill="#4a4a4a"/>
<rect x="192" y="96" width="1" height="1" fill="#4a4a4a"/>
<rect x="194" y="96" width="1" height="1" fill="#4a4a4a"/>
<rect x="196" y="96" width="1" height="1" fill="#4a4a4a"/>
<rect x="198" y="96" width="1" height="1" fill="#4a4a4a"/>
<rect x="200" y="96" width="1" height="1" fill="#4a4a4a"/>
<rect x="202" y="96" width="1" height="1" fill="#4a4a4a"/>
<rect x="204" y="96" width="1" height="1" fill="#4a4a4a"/>
<rect x="192" y="100" width="1" height="1" fill="#4a4a4a"/>
<rect x="194" y="100" width="1" height="1" fill="#4a4a4a"/>
<rect x="196" y="100" width="1" height="1" fill="#4a4a4a"/>
<rect x="198" y="100" width="1" height="1" fill="#4a4a4a"/>
<rect x="200" y="100" width="1" height="1" fill="#4a4a4a"/>
<text x="201.5" y="105" font-size="7" fill="#4a4a4a" font-family='"Liberation Sans",sans-serif' font-weight="bold">F</text>
<text x="222.3" y="101" font-size="12.5" fill="#4a4a4a" font-family='"Liberation Sans",sans-serif' stroke="#4a4a4a" stroke-width=".45">A</text>
<rect x="249" y="90" width="1" height="1" fill="#4a4a4a"/>
<rect x="249" y="102" width="1" height="1" fill="#4a4a4a"/>
<rect x="249" y="90" width="1" height="1" fill="#4a4a4a"/>
<rect x="260" y="90" width="1" height="1" fill="#4a4a4a"/>
<rect x="251" y="90" width="1" height="1" fill="#4a4a4a"/>
<rect x="251" y="102" width="1" height="1" fill="#4a4a4a"/>
<rect x="249" y="92" width="1" height="1" fill="#4a4a4a"/>
<rect x="260" y="92" width="1" height="1" fill="#4a4a4a"/>
<rect x="253" y="90" width="1" height="1" fill="#4a4a4a"/>
<rect x="253" y="102" width="1" height="1" fill="#4a4a4a"/>
<rect x="249" y="94" width="1" height="1" fill="#4a4a4a"/>
<rect x="260" y="94" width="1" height="1" fill="#4a4a4a"/>
<rect x="255" y="90" width="1" height="1" fill="#4a4a4a"/>
<rect x="255" y="102" width="1" height="1" fill="#4a4a4a"/>
<rect x="249" y="96" width="1" height="1" fill="#4a4a4a"/>
<rect x="260" y="96" width="1" height="1" fill="#4a4a4a"/>
<rect x="257" y="90" width="1" height="1" fill="#4a4a4a"/>
<rect x="257" y="102" width="1" height="1" fill="#4a4a4a"/>
<rect x="249" y="98" width="1" height="1" fill="#4a4a4a"/>
<rect x="260" y="98" width="1" height="1" fill="#4a4a4a"/>
<rect x="259" y="90" width="1" height="1" fill="#4a4a4a"/>
<rect x="259" y="102" width="1" height="1" fill="#4a4a4a"/>
<rect x="249" y="100" width="1" height="1" fill="#4a4a4a"/>
<rect x="260" y="100" width="1" height="1" fill="#4a4a4a"/>
<rect x="260" y="102" width="1" height="1" fill="#4a4a4a"/>
<rect x="248" y="89" width="2" height="2" fill="#4a4a4a"/>
<rect x="251" y="93" width="8" height="1.4" fill="#4a4a4a"/>
<rect x="254.3" y="93" width="1.4" height="8" fill="#4a4a4a"/>
<path d="M279.5 89.5 l3.7 4 h-7.4 z M286.5 103 l3.7 -4 h-7.4 z" fill="#4a4a4a"/>
<rect x="278" y="93" width="3" height="2" fill="#4a4a4a"/>
<rect x="285" y="97.5" width="3" height="2" fill="#4a4a4a"/>
<path d="M278 97.6 l2.3 2.2 l4.4 -5.4" fill="none" stroke="#4a4a4a" stroke-width="1.3"/>
<text x="268" y="73" textLength="61">Nueva orden</text>
<text x="390" y="73" textLength="89">Asesores expertos</text>
<text x="322" y="100" font-size="9" fill="#222" textLength="12">M1</text>
<text x="350" y="100" font-size="9" fill="#222" textLength="12.3">M5</text>
<text x="375.5" y="100" font-size="9" fill="#222" textLength="17.5">M15</text>
<text x="403.5" y="100" font-size="9" fill="#222" textLength="18.5">M30</text>
<text x="434.5" y="100" font-size="9" fill="#222" textLength="11.5">H1</text>
<text x="462" y="100" font-size="9" fill="#222" textLength="11.5">H4</text>
<text x="490.5" y="100" font-size="9" fill="#222" textLength="11.5">D1</text>
<text x="518.5" y="100" font-size="9" fill="#222" textLength="14">W1</text>
<text x="544.8" y="100" font-size="9" fill="#222" textLength="14.3">MN</text>
<rect x="6" y="625" width="1021" height="2" fill="#fff"/>
<rect x="6" y="627" width="1021" height="1" fill="#000"/>
<rect x="96" y="625" width="68" height="21" fill="#fff"/>
<rect x="96" y="627" width="1" height="19" fill="#000"/>
<rect x="163" y="627" width="1" height="19" fill="#000"/>
<rect x="96" y="645" width="68" height="1" fill="#000"/>
<rect x="164" y="628" width="1" height="18" fill="#8d8a78"/>
<rect x="6" y="647" width="1021" height="1" fill="#fff"/>
<text x="17" y="640" fill="#7b7b7b" textLength="66">EURUSD,Daily</text>
<text x="107.5" y="640" textLength="44">OIL,Daily</text>
<text x="173" y="640" fill="#7b7b7b" textLength="66">USDCHF,Daily</text>
<text x="263" y="640" fill="#7b7b7b" textLength="64">USDJPY,Daily</text>
<rect x="252" y="631" width="1" height="13" fill="#555"/>
<rect x="340" y="631" width="1" height="13" fill="#555"/>
<path d="M1004 633.5 v7 l-4 -3.5 z M1017 633.5 v7 l4 -3.5 z" fill="#b0ada0"/>
<linearGradient id="cap" x1="0" y1="0" x2="0" y2="1"><stop offset="0" stop-color="#a0b7ee"/><stop offset="1" stop-color="#6e8fe0"/></linearGradient>
<rect x="6" y="665" width="12" height="53" fill="url(#cap)"/>
<text transform="translate(16,715.5) rotate(-90)" fill="#dfe7fb" font-size="11" textLength="42.5">Terminal</text>
<path d="M8.5 654.5 l5 4 M13.5 654.5 l-5 4" fill="none" stroke="#000" stroke-width="1.4"/>
<rect x="19" y="651" width="1006" height="1" fill="#aca899"/>
<rect x="19" y="651" width="1" height="67" fill="#aca899"/>
<rect x="1025" y="651" width="1" height="67" fill="#fff"/>
<rect x="20" y="652" width="985" height="18" fill="#ECE9D8"/>
<rect x="20" y="669" width="985" height="1" fill="#e0ddcd"/>
<rect x="20" y="670" width="985" height="1" fill="#d0ccbb"/>
<rect x="20" y="671" width="985" height="1" fill="#c2bead"/>
<rect x="115" y="655" width="1" height="13" fill="#aca899"/>
<rect x="116" y="655" width="1" height="13" fill="#fff"/>
<rect x="280" y="655" width="1" height="13" fill="#aca899"/>
<rect x="281" y="655" width="1" height="13" fill="#fff"/>
<rect x="347" y="655" width="1" height="13" fill="#aca899"/>
<rect x="348" y="655" width="1" height="13" fill="#fff"/>
<rect x="399" y="655" width="1" height="13" fill="#aca899"/>
<rect x="400" y="655" width="1" height="13" fill="#fff"/>
<rect x="467" y="655" width="1" height="13" fill="#aca899"/>
<rect x="468" y="655" width="1" height="13" fill="#fff"/>
<rect x="542" y="655" width="1" height="13" fill="#aca899"/>
<rect x="543" y="655" width="1" height="13" fill="#fff"/>
<rect x="617" y="655" width="1" height="13" fill="#aca899"/>
<rect x="618" y="655" width="1" height="13" fill="#fff"/>
<rect x="691" y="655" width="1" height="13" fill="#aca899"/>
<rect x="692" y="655" width="1" height="13" fill="#fff"/>
<rect x="766" y="655" width="1" height="13" fill="#aca899"/>
<rect x="767" y="655" width="1" height="13" fill="#fff"/>
<rect x="841" y="655" width="1" height="13" fill="#aca899"/>
<rect x="842" y="655" width="1" height="13" fill="#fff"/>
<rect x="916" y="655" width="1" height="13" fill="#aca899"/>
<rect x="917" y="655" width="1" height="13" fill="#fff"/>
<rect x="1003" y="655" width="1" height="13" fill="#aca899"/>
<rect x="1004" y="655" width="1" height="13" fill="#fff"/>
<text x="28.5" y="666" textLength="29.5">Orden</text>
<text x="275" y="666" textLength="32" text-anchor="end">Tiempo</text>
<text x="342" y="666" textLength="18" text-anchor="end">Tipo</text>
<text x="357" y="666" textLength="32">Volu...</text>
<text x="409" y="666" textLength="33">Símb...</text>
<text x="536" y="666" textLength="29" text-anchor="end">Precio</text>
<text x="611" y="666" textLength="20" text-anchor="end">S / L</text>
<text x="686" y="666" textLength="20.5" text-anchor="end">T / P</text>
<text x="761" y="666" textLength="29" text-anchor="end">Precio</text>
<text x="836" y="666" textLength="41.5" text-anchor="end">Comisión</text>
<text x="911" y="666" textLength="26" text-anchor="end">Swap</text>
<text x="998.5" y="666" textLength="48" text-anchor="end">Beneficios</text>
<path d="M457.5 667.5 L460.5 661.5 L463.5 667.5 Z" fill="none" stroke="#aca899" stroke-width="1"/>
<rect x="20" y="672" width="985" height="20" fill="#316ac5"/>
<rect x="115" y="672" width="1" height="20" fill="#c4d5f3"/>
<rect x="280" y="672" width="1" height="20" fill="#c4d5f3"/>
<rect x="347" y="672" width="1" height="20" fill="#c4d5f3"/>
<rect x="399" y="672" width="1" height="20" fill="#c4d5f3"/>
<rect x="467" y="672" width="1" height="20" fill="#c4d5f3"/>
<rect x="542" y="672" width="1" height="20" fill="#c4d5f3"/>
<rect x="617" y="672" width="1" height="20" fill="#c4d5f3"/>
<rect x="691" y="672" width="1" height="20" fill="#c4d5f3"/>
<rect x="766" y="672" width="1" height="20" fill="#c4d5f3"/>
<rect x="841" y="672" width="1" height="20" fill="#c4d5f3"/>
<rect x="916" y="672" width="1" height="20" fill="#c4d5f3"/>
<rect x="20" y="692" width="985" height="5" fill="#f0f0ee"/>
<rect x="115" y="692" width="1" height="5" fill="#d6d2c2"/>
<rect x="280" y="692" width="1" height="5" fill="#d6d2c2"/>
<rect x="347" y="692" width="1" height="5" fill="#d6d2c2"/>
<rect x="399" y="692" width="1" height="5" fill="#d6d2c2"/>
<rect x="467" y="692" width="1" height="5" fill="#d6d2c2"/>
<rect x="542" y="692" width="1" height="5" fill="#d6d2c2"/>
<rect x="617" y="692" width="1" height="5" fill="#d6d2c2"/>
<rect x="691" y="692" width="1" height="5" fill="#d6d2c2"/>
<rect x="766" y="692" width="1" height="5" fill="#d6d2c2"/>
<rect x="841" y="692" width="1" height="5" fill="#d6d2c2"/>
<rect x="916" y="692" width="1" height="5" fill="#d6d2c2"/>
<text x="44.5" y="686" fill="#fff" textLength="47.5">27329376</text>
<text x="277" y="686" fill="#fff" textLength="87" text-anchor="end">2010.11.02 13:28</text>
<text x="342.7" y="686" fill="#fff" textLength="13.7" text-anchor="end">sell</text>
<text x="396" y="686" fill="#fff" textLength="21.5" text-anchor="end">0.10</text>
<text x="463" y="686" fill="#fff" textLength="10" text-anchor="end">oil</text>
<text x="538" y="686" fill="#fff" textLength="27.5" text-anchor="end">85.53</text>
<text x="613" y="686" fill="#fff" textLength="21.5" text-anchor="end">0.00</text>
<text x="688" y="686" fill="#fff" textLength="21.5" text-anchor="end">0.00</text>
<text x="763.7" y="686" fill="#fff" textLength="27.5" text-anchor="end">85.68</text>
<text x="838" y="686" fill="#fff" textLength="21.5" text-anchor="end">0.00</text>
<text x="913.7" y="686" fill="#fff" textLength="26.5" text-anchor="end">-0.92</text>
<text x="1000" y="686" fill="#fff" textLength="14.5" text-anchor="end">-15</text>
<path d="M23.5 676.5 q0 -1 1 -1 h5.5 l3 3 v9.5 q0 1 -1 1 h-7.5 q-1 0 -1 -1 z" fill="#fff" stroke="#8a8a8a" stroke-width="1"/>
<path d="M30 675.5 v3 h3" fill="none" stroke="#9a9a9a" stroke-width="1"/>
<circle cx="33.4" cy="686.2" r="3" fill="#e8501e" stroke="#a8300c" stroke-width=".9"/>
<rect x="32" y="684" width="2" height="1" fill="#f6a080"/>
<path d="M23.5 697 v-.5 q0 -1.5 1.5 -1.5 h5 l1.5 1.5" fill="#fff" stroke="#8a8a8a" stroke-width="1"/>
<rect x="1005" y="652" width="19" height="45" fill="#f6f5f0"/>
<rect x="1006.5" y="652.5" width="16" height="17" rx="2" fill="#c3d3fb" stroke="#fff"/>
<path d="M1010.5 664 l4 -4 l4 4" fill="none" stroke="#4d6185" stroke-width="2"/>
<rect x="1006.5" y="678.5" width="16" height="17" rx="2" fill="#c3d3fb" stroke="#fff"/>
<path d="M1010.5 686 l4 4 l4 -4" fill="none" stroke="#4d6185" stroke-width="2"/>
<rect x="1005" y="696" width="19" height="1" fill="#f6f5f0"/>
<rect x="20" y="697" width="1005" height="1" fill="#000"/>
<rect x="22" y="697" width="80" height="19" fill="#fff"/>
<rect x="22" y="697" width="1" height="19" fill="#000"/>
<rect x="101" y="697" width="1" height="19" fill="#000"/>
<rect x="22" y="715" width="80" height="1" fill="#000"/>
<rect x="102" y="699" width="1" height="17" fill="#8d8a78"/>
<text x="31.7" y="710" textLength="59.3">Operaciones</text>
<text x="111.7" y="710" fill="#7b7b7b" textLength="92.3">Historial de cuentas</text>
<text x="226" y="710" fill="#7b7b7b" textLength="35.7">Noticias</text>
<text x="282.7" y="710" fill="#7b7b7b" textLength="30">Avisos</text>
<text x="335" y="710" fill="#7b7b7b" textLength="27">Buzón</text>
<text x="382" y="710" fill="#7b7b7b" textLength="27">Diario</text>
<rect x="216" y="702" width="1" height="13" fill="#555"/>
<rect x="273" y="702" width="1" height="13" fill="#555"/>
<rect x="324" y="702" width="1" height="13" fill="#555"/>
<rect x="373" y="702" width="1" height="13" fill="#555"/>
<rect x="420" y="702" width="1" height="13" fill="#555"/>
<rect x="19" y="717" width="1007" height="1" fill="#fff"/>
<rect x="6" y="720" width="1021" height="1" fill="#aca899"/>
<rect x="6" y="721" width="1021" height="1" fill="#fff"/>
<text x="5.6" y="737" textLength="141.5">Para obtener ayuda, pulse F1</text>
<text x="209" y="737" textLength="35">Default</text>
<rect x="204" y="724" width="1" height="16" fill="#aca899"/>
<rect x="205" y="724" width="1" height="16" fill="#fff"/>
<rect x="336" y="724" width="1" height="16" fill="#aca899"/>
<rect x="337" y="724" width="1" height="16" fill="#fff"/>
<rect x="455" y="724" width="1" height="16" fill="#aca899"/>
<rect x="456" y="724" width="1" height="16" fill="#fff"/>
<rect x="539" y="724" width="1" height="16" fill="#aca899"/>
<rect x="540" y="724" width="1" height="16" fill="#fff"/>
<rect x="622" y="724" width="1" height="16" fill="#aca899"/>
<rect x="623" y="724" width="1" height="16" fill="#fff"/>
<rect x="703" y="724" width="1" height="16" fill="#aca899"/>
<rect x="704" y="724" width="1" height="16" fill="#fff"/>
<rect x="786" y="724" width="1" height="16" fill="#aca899"/>
<rect x="787" y="724" width="1" height="16" fill="#fff"/>
<rect x="866" y="724" width="1" height="16" fill="#aca899"/>
<rect x="867" y="724" width="1" height="16" fill="#fff"/>
<rect x="872" y="727" width="2" height="10" fill="#5c7a10"/>
<rect x="872" y="737" width="2" height="2" fill="#1a4a6e"/>
<rect x="875" y="727" width="2" height="9" fill="#5c7a10"/>
<rect x="875" y="736" width="2" height="3" fill="#1a4a6e"/>
<rect x="878" y="727" width="2" height="8" fill="#5c7a10"/>
<rect x="878" y="735" width="2" height="4" fill="#1a4a6e"/>
<rect x="881" y="727" width="2" height="7" fill="#5c7a10"/>
<rect x="881" y="734" width="2" height="5" fill="#1a4a6e"/>
<rect x="884" y="727" width="2" height="6" fill="#5c7a10"/>
<rect x="884" y="733" width="2" height="6" fill="#1a4a6e"/>
<rect x="887" y="727" width="2" height="5" fill="#5c7a10"/>
<rect x="887" y="732" width="2" height="7" fill="#1a4a6e"/>
<rect x="890" y="727" width="2" height="4" fill="#5c7a10"/>
<rect x="890" y="731" width="2" height="8" fill="#1a4a6e"/>
<rect x="893" y="727" width="2" height="3" fill="#5c7a10"/>
<rect x="893" y="730" width="2" height="9" fill="#1a4a6e"/>
<text x="923.8" y="737" textLength="35">32/1 kb</text>
<path d="M1013 742 L1028 727" fill="none" stroke="#fff" stroke-width="1.4"/>
<path d="M1014.5 742 L1028 728.5" fill="none" stroke="#a8a590" stroke-width="1.4"/>
<path d="M1017 742 L1028 731" fill="none" stroke="#fff" stroke-width="1.4"/>
<path d="M1018.5 742 L1028 732.5" fill="none" stroke="#a8a590" stroke-width="1.4"/>
<path d="M1021 742 L1028 735" fill="none" stroke="#fff" stroke-width="1.4"/>
<path d="M1022.5 742 L1028 736.5" fill="none" stroke="#a8a590" stroke-width="1.4"/>
<rect x="1027" y="722" width="1" height="20" fill="#fbf8ec"/>
<rect x="1028" y="722" width="2" height="24" fill="#0636df"/>
<rect x="6" y="742" width="1024" height="2" fill="#0540e0"/>
<rect x="6" y="744" width="1024" height="2" fill="#0026a8"/>
</svg></body></html>
